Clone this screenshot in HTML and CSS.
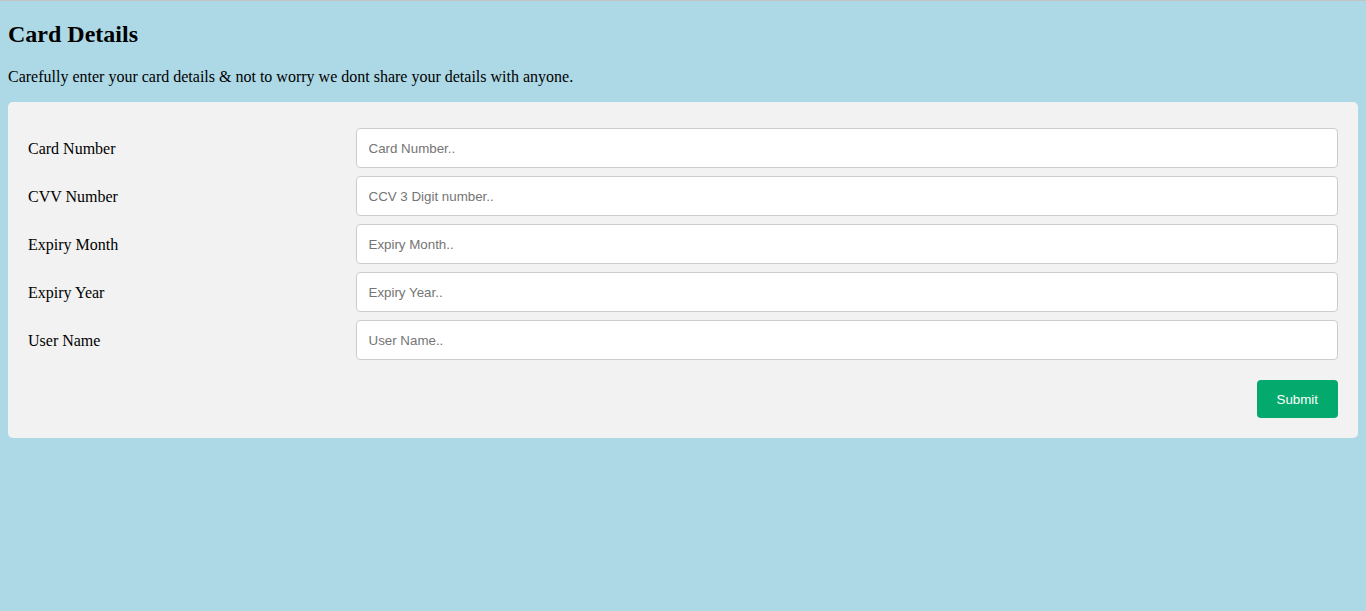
FILE: index.html
```html
<!DOCTYPE html>
<html>
<head>
<meta charset="utf-8">
<link rel="stylesheet" href="styles.css">
</head>
<body>
<h2 class="title">Card Details</h2>
<p class="intro">Carefully enter your card details &amp; not to worry we dont share your details with anyone.</p>
<div class="container">
  <form class="form">
    <div class="row">
      <div class="col-25"><label class="label">Card Number</label></div>
      <div class="col-75"><input class="field" type="text" placeholder="Card Number.."></div>
    </div>
    <div class="row">
      <div class="col-25"><label class="label">CVV Number</label></div>
      <div class="col-75"><input class="field" type="text" placeholder="CCV 3 Digit number.."></div>
    </div>
    <div class="row">
      <div class="col-25"><label class="label">Expiry Month</label></div>
      <div class="col-75"><input class="field" type="text" placeholder="Expiry Month.."></div>
    </div>
    <div class="row">
      <div class="col-25"><label class="label">Expiry Year</label></div>
      <div class="col-75"><input class="field" type="text" placeholder="Expiry Year.."></div>
    </div>
    <div class="row">
      <div class="col-25"><label class="label">User Name</label></div>
      <div class="col-75"><input class="field" type="text" placeholder="User Name.."></div>
    </div>
    <div class="actions">
      <input class="submit" type="submit" value="Submit">
    </div>
  </form>
</div>
</body>
</html>
```
FILE: styles.css
```css
html {
  background: #add8e6;
}
body {
  margin: 0 8px 8px 8px;
  padding-top: 20px;
  background: #add8e6;
  font-family: "Liberation Serif", "Times New Roman", serif;
  font-size: 16px;
  color: #000;
}
body::before {
  content: "";
  position: fixed;
  top: 0;
  left: 0;
  right: 0;
  height: 1px;
  background: #c3c3c3;
}
.title {
  font-size: 24px;
  font-weight: bold;
  margin: 0 0 20px 0;
  line-height: 28px;
}
.intro {
  margin: 0 0 16px 0;
  line-height: 18px;
}
.container {
  background: #f2f2f2;
  border-radius: 5px;
  padding: 20px;
}
.form {
  margin: 0;
  display: flex;
  flex-direction: column;
}
.row {
  display: flex;
}
.col-25 {
  width: 25%;
  margin-top: 6px;
}
.col-75 {
  width: 75%;
  margin-top: 6px;
}
.label {
  display: inline-block;
  padding: 12px 12px 12px 0;
  line-height: 18px;
}
.field {
  display: block;
  box-sizing: border-box;
  width: 100%;
  height: 40px;
  padding: 12px;
  border: 1px solid #ccc;
  border-radius: 4px;
  background: #fff;
  font-family: "Liberation Sans", Arial, sans-serif;
  font-size: 13.333px;
  margin: 0;
}
.field::placeholder {
  color: #757575;
}
.actions {
  display: flex;
  justify-content: flex-end;
  margin-top: 18px;
}
.submit {
  background: #04aa6d;
  color: #fff;
  border: none;
  border-radius: 4px;
  height: 38px;
  padding: 0 20px;
  font-family: "Liberation Sans", Arial, sans-serif;
  font-size: 13.333px;
  cursor: pointer;
  margin: 0;
}
```
